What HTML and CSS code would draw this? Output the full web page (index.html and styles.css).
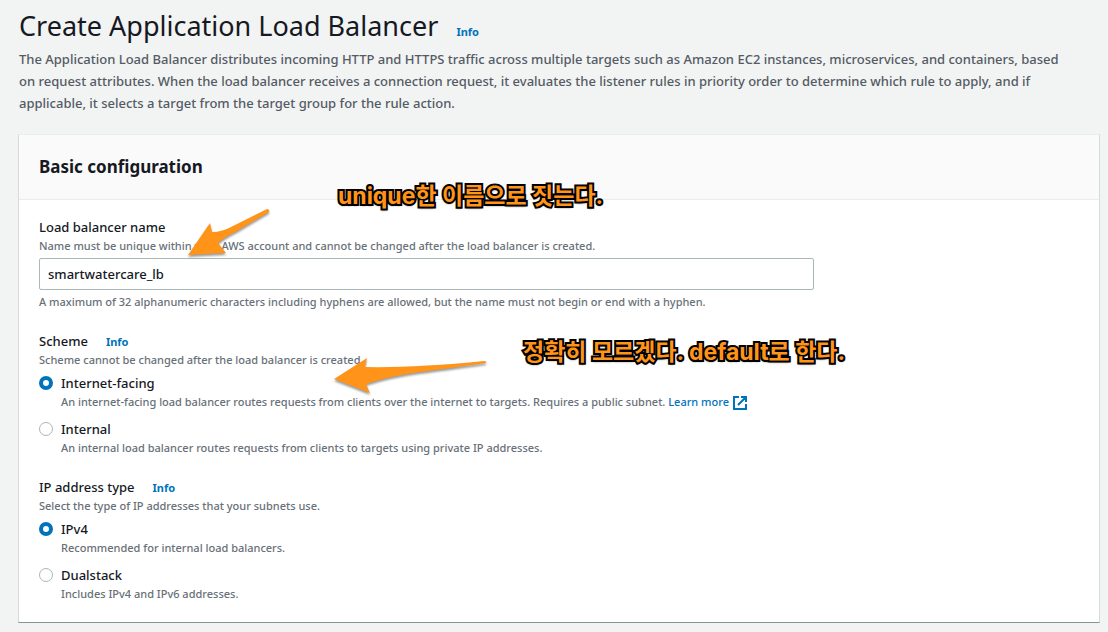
FILE: index.html
```html
<!DOCTYPE html>
<html lang="en">
<head>
<meta charset="utf-8">
<title>Create Application Load Balancer</title>
<link rel="stylesheet" href="styles.css">
</head>
<body>
<main class="page">
  <header class="page-header">
    <div class="title-row">
      <h1 class="title">Create Application Load Balancer</h1>
      <a class="info" href="#">Info</a>
    </div>
    <p class="intro">The Application Load Balancer distributes incoming HTTP and HTTPS traffic across multiple targets such as Amazon EC2 instances, microservices, and containers, based on request attributes. When the load balancer receives a connection request, it evaluates the listener rules in priority order to determine which rule to apply, and if applicable, it selects a target from the target group for the rule action.</p>
  </header>
  <section class="card">
    <div class="card-header"><h2 class="card-title">Basic configuration</h2></div>
    <form class="card-body">
      <div class="field">
        <label class="label" for="lb-name">Load balancer name</label>
        <p class="hint">Name must be unique within your AWS account and cannot be changed after the load balancer is created.</p>
        <div class="control"><input class="text-input" id="lb-name" type="text" value="smartwatercare_lb"></div>
        <p class="hint">A maximum of 32 alphanumeric characters including hyphens are allowed, but the name must not begin or end with a hyphen.</p>
      </div>
      <div class="field" role="radiogroup" aria-labelledby="scheme">
        <div class="label-row"><span class="label" id="scheme">Scheme</span><a class="info" href="#">Info</a></div>
        <p class="hint">Scheme cannot be changed after the load balancer is created.</p>
        <div class="options">
          <div class="option">
            <input class="radio" type="radio" name="scheme" id="facing" checked>
            <label class="label" for="facing">Internet-facing</label>
            <p class="hint option-hint">An internet-facing load balancer routes requests from clients over the internet to targets. Requires a public subnet. <a class="learn" href="#">Learn more <svg class="external" viewBox="0 0 16 16" aria-hidden="true"><path d="M7 2H2v12h12V9M9 2h5v5M6 10l8-8"/></svg></a></p>
          </div>
          <div class="option">
            <input class="radio" type="radio" name="scheme" id="internal">
            <label class="label" for="internal">Internal</label>
            <p class="hint option-hint">An internal load balancer routes requests from clients to targets using private IP addresses.</p>
          </div>
        </div>
      </div>
      <div class="field" role="radiogroup" aria-labelledby="iptype">
        <div class="label-row"><span class="label" id="iptype">IP address type</span><a class="info" href="#">Info</a></div>
        <p class="hint">Select the type of IP addresses that your subnets use.</p>
        <div class="options">
          <div class="option">
            <input class="radio" type="radio" name="iptype" id="ipv4" checked>
            <label class="label" for="ipv4">IPv4</label>
            <p class="hint option-hint">Recommended for internal load balancers.</p>
          </div>
          <div class="option">
            <input class="radio" type="radio" name="iptype" id="dual">
            <label class="label" for="dual">Dualstack</label>
            <p class="hint option-hint">Includes IPv4 and IPv6 addresses.</p>
          </div>
        </div>
      </div>
    </form>
  </section>
  <svg class="arrow arrow-name" viewBox="0 0 90 56" aria-hidden="true"><path d="M4 51 26 19 28 28Q38 28 49 22L83 5Q86 5 85 8L53 27Q41 33 34 39L42 49Z"/></svg>
  <svg class="arrow arrow-scheme" viewBox="0 0 160 45" aria-hidden="true"><path d="M4 24 37 3 35 12Q85 13 154 6Q157 6 156 8Q115 14 90 17Q60 21 36 29L40 38Z"/></svg>
  <p class="note note-name" lang="ko">unique한 이름으로 짓는다.</p>
  <p class="note note-scheme" lang="ko">정확히 모르겠다. default로 한다.</p>
</main>
</body>
</html>
```
FILE: styles.css
```css
* { box-sizing: border-box; }
body {
  margin: 0;
  background: #f2f3f3;
  color: #16191f;
  font: 500 13px/22px "Noto Sans", "Open Sans", sans-serif;
}
h1, h2, p { margin: 0; }
a { color: #0073bb; text-decoration: none; }
.page { position: relative; padding: 6px 8px 9px 18px; }
.page-header { padding: 0 1px; }
.title-row { display: flex; align-items: baseline; gap: 18px; }
.title { font-size: 27px; line-height: 40px; font-weight: 400; }
.info { font-size: 11px; line-height: 16px; font-weight: 700; }
.intro { padding: 2px 30px 2px 0; color: #545b64; }
.card {
  margin-top: 18px;
  background: #fff;
  border: 1px solid #d5dbdb;
  border-top-color: #eaeded;
  border-bottom-color: #879596;
}
.card-header { padding: 20px; background: #fafafa; border-bottom: 1px solid #eaeded; }
.card-title { font-size: 17px; line-height: 24px; font-weight: 700; }
.card-body { display: flex; flex-direction: column; gap: 20px; padding: 16px 20px 20px; }
.field { display: flex; flex-direction: column; }
.label { line-height: 22px; }
.label-row { display: flex; align-items: baseline; gap: 18px; }
.hint { color: #687078; font-size: 11px; line-height: 16px; }
.control { display: grid; grid-template-columns: repeat(12, 1fr); gap: 20px; padding: 4px 0; }
.text-input {
  grid-column: span 9;
  width: 100%;
  height: 32px;
  padding: 4px 8px;
  border: 1px solid #aab7b8;
  border-radius: 2px;
  background: #fff;
  color: #16191f;
  font: inherit;
}
.options { display: flex; flex-direction: column; gap: 8px; padding-top: 4px; }
.option { display: grid; grid-template-columns: 14px 1fr; column-gap: 8px; align-items: center; }
.option-hint { grid-column: 2; }
.radio {
  appearance: none;
  width: 14px;
  height: 14px;
  margin: 0;
  border: 1px solid #aab7b8;
  border-radius: 50%;
  background: #fff;
}
.radio:checked { border: 4px solid #0073bb; }
.learn { white-space: nowrap; }
.external { width: 16px; height: 16px; margin: -4px 0; vertical-align: middle; fill: none; stroke: #0073bb; stroke-width: 2; }
.arrow { position: absolute; overflow: visible; fill: #ff9419; filter: drop-shadow(0 2px 1px rgba(0, 0, 0, 0.4)); }
.arrow-name { left: 184px; top: 204px; width: 90px; height: 56px; }
.arrow-scheme { left: 330px; top: 355px; width: 160px; height: 45px; }
.note {
  position: absolute;
  color: #ff9419;
  font: 700 23px/30px Inter, "Noto Sans CJK KR", sans-serif;
  white-space: nowrap;
  -webkit-text-stroke: 4px #000;
  paint-order: stroke fill;
  text-shadow: 0 2px 2px rgba(0, 0, 0, 0.5);
}
.note-name { left: 338px; top: 181px; }
.note-scheme { left: 523px; top: 337px; }
```
